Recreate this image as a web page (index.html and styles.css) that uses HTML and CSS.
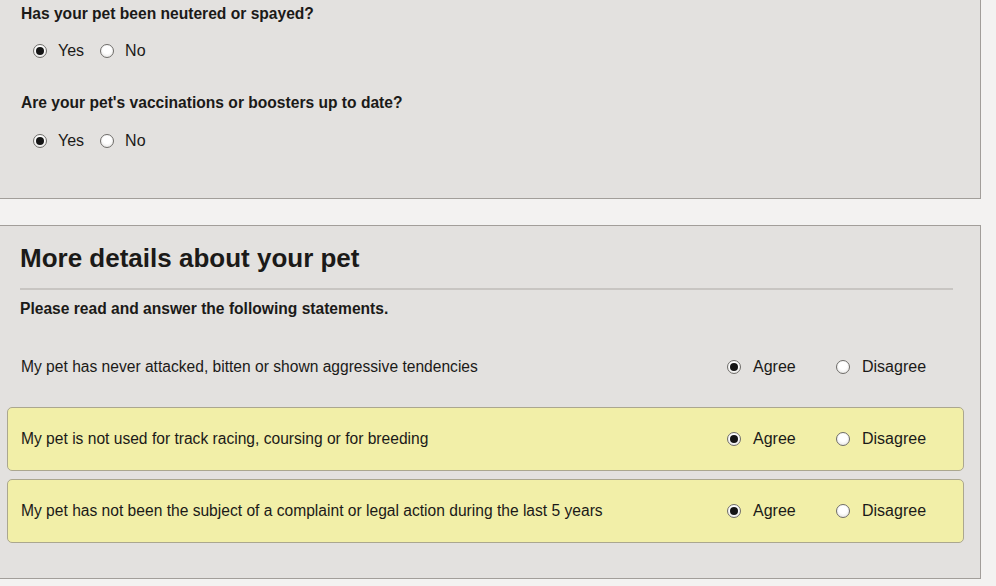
FILE: index.html
```html
<!DOCTYPE html>
<html lang="en">
<head>
    <meta charset="UTF-8">
    <meta name="viewport" content="width=device-width, initial-scale=1.0">
    <title>Pet details</title>
    <link rel="stylesheet" href="styles.css">
</head>
<body>
    <!-- Basic questions -->
    <div class="panel panel-top">
        <div class="pregunta">
            <p class="pregunta-texto">Has your pet been neutered or spayed?</p>
            <div class="opciones">
                <label class="opcion"><input type="radio" name="neutered" checked> Yes</label>
                <label class="opcion"><input type="radio" name="neutered"> No</label>
            </div>
        </div>
        <div class="pregunta">
            <p class="pregunta-texto">Are your pet's vaccinations or boosters up to date?</p>
            <div class="opciones">
                <label class="opcion"><input type="radio" name="vaccinations" checked> Yes</label>
                <label class="opcion"><input type="radio" name="vaccinations"> No</label>
            </div>
        </div>
    </div>

    <!-- More details -->
    <div class="panel panel-detalles">
        <h2>More details about your pet</h2>
        <p class="instrucciones">Please read and answer the following statements.</p>

        <div class="declaracion">
            <span class="declaracion-texto">My pet has never attacked, bitten or shown aggressive tendencies</span>
            <label class="opcion-ancha"><input type="radio" name="st1" checked> Agree</label>
            <label class="opcion-ancha"><input type="radio" name="st1"> Disagree</label>
        </div>

        <div class="declaracion resaltada">
            <span class="declaracion-texto">My pet is not used for track racing, coursing or for breeding</span>
            <label class="opcion-ancha"><input type="radio" name="st2" checked> Agree</label>
            <label class="opcion-ancha"><input type="radio" name="st2"> Disagree</label>
        </div>

        <div class="declaracion resaltada">
            <span class="declaracion-texto">My pet has not been the subject of a complaint or legal action during the last 5 years</span>
            <label class="opcion-ancha"><input type="radio" name="st3" checked> Agree</label>
            <label class="opcion-ancha"><input type="radio" name="st3"> Disagree</label>
        </div>
    </div>
</body>
</html>
```

FILE: styles.css
```css
body {
    font-family: "Liberation Sans", Arial, sans-serif;
    font-size: 15.6px;
    color: #1b1a18;
    margin: 0;
    background-color: #f3f2f1;
}

.panel {
    width: 981px;
    box-sizing: border-box;
    background-color: #e3e1df;
    border-right: 1px solid #a29e9a;
    border-bottom: 1px solid #a29e9a;
}

.panel-top {
    height: 199px;
    padding: 4px 0 0 21px;
}

.pregunta {
    margin-bottom: 32px;
}

.pregunta-texto {
    font-weight: bold;
    line-height: 20px;
    margin: 0;
}

.opciones {
    display: flex;
    gap: 16px;
    margin: 17px 0 0 12px;
    line-height: 20px;
}

.pregunta + .pregunta .opciones {
    margin-top: 18px;
}

.opcion,
.opcion-ancha {
    display: flex;
    align-items: center;
    gap: 11px;
    font-size: 16px;
}

.panel-detalles {
    margin-top: 26px;
    border-top: 1px solid #a29e9a;
    height: 354px;
    padding: 0 16px 0 7px;
}

h2 {
    font-size: 26px;
    margin: 16px 11px 0 13px;
    line-height: 32px;
    padding-bottom: 14px;
    border-bottom: 2px solid #c8c5c2;
}

.instrucciones {
    font-weight: bold;
    margin: 9px 0 16px 13px;
    line-height: 20px;
}

.declaracion {
    display: grid;
    grid-template-columns: 1fr 109px 109px;
    align-items: center;
    height: 64px;
    box-sizing: border-box;
    padding: 0 18px 0 13px;
    margin-bottom: 8px;
    border: 1px solid transparent;
    border-radius: 5px;
}

.resaltada {
    background-color: #f2efa8;
    border-color: #aba78f;
}

.opcion-ancha {
    gap: 12px;
}

input[type="radio"] {
    appearance: none;
    width: 14px;
    height: 14px;
    margin: 0;
    border: 1px solid #6f6d6a;
    border-radius: 50%;
    background: radial-gradient(circle at 50% 40%, #ffffff 40%, #dedcda 100%);
    display: grid;
    place-content: center;
}

input[type="radio"]:checked::before {
    content: "";
    width: 8px;
    height: 8px;
    border-radius: 50%;
    background-color: #151515;
}
```
